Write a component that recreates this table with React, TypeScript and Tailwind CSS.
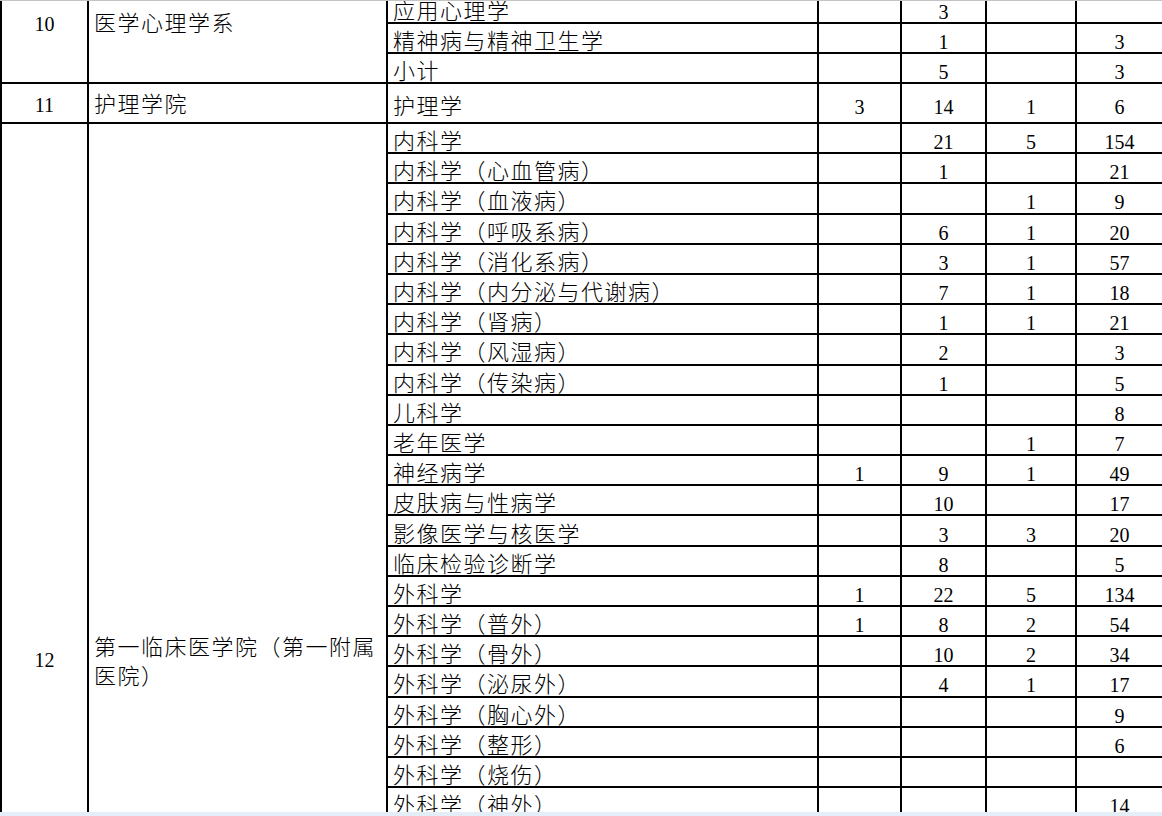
type Row = [string, string, string, string, string];

const psychRows: Row[] = [
  ["应用心理学", "", "3", "", ""],
  ["精神病与精神卫生学", "", "1", "", "3"],
  ["小计", "", "5", "", "3"],
];

const clinicRows: Row[] = [
  ["内科学", "", "21", "5", "154"],
  ["内科学（心血管病）", "", "1", "", "21"],
  ["内科学（血液病）", "", "", "1", "9"],
  ["内科学（呼吸系病）", "", "6", "1", "20"],
  ["内科学（消化系病）", "", "3", "1", "57"],
  ["内科学（内分泌与代谢病）", "", "7", "1", "18"],
  ["内科学（肾病）", "", "1", "1", "21"],
  ["内科学（风湿病）", "", "2", "", "3"],
  ["内科学（传染病）", "", "1", "", "5"],
  ["儿科学", "", "", "", "8"],
  ["老年医学", "", "", "1", "7"],
  ["神经病学", "1", "9", "1", "49"],
  ["皮肤病与性病学", "", "10", "", "17"],
  ["影像医学与核医学", "", "3", "3", "20"],
  ["临床检验诊断学", "", "8", "", "5"],
  ["外科学", "1", "22", "5", "134"],
  ["外科学（普外）", "1", "8", "2", "54"],
  ["外科学（骨外）", "", "10", "2", "34"],
  ["外科学（泌尿外）", "", "4", "1", "17"],
  ["外科学（胸心外）", "", "", "", "9"],
  ["外科学（整形）", "", "", "", "6"],
  ["外科学（烧伤）", "", "", "", ""],
  ["外科学（神外）", "", "", "", "14"],
];

function Cells({ row }: { row: Row }) {
  return (
    <>
      <td className="border-2 border-black pl-[5px] pt-[8px] pb-0 leading-[18px] align-middle whitespace-nowrap">
        {row[0]}
      </td>
      {row.slice(1).map((v, i) => (
        <td
          key={i}
          className="border-2 border-black pt-[8px] pb-0 leading-[18px] align-middle text-center text-[20px] tracking-normal font-normal"
        >
          {v}
        </td>
      ))}
    </>
  );
}

export default function App() {
  return (
    <div className="h-[816px] overflow-hidden bg-white flex flex-col">
      <div className="h-[812px] overflow-hidden border-t border-[#c4c4c4]">
        <table className="mt-[-9px] w-[1162px] table-fixed border-collapse text-black text-[22px] tracking-[1.5px] font-light font-['Liberation_Serif','Noto_Sans_CJK_SC',serif]">
          <colgroup>
            <col className="w-[87px]" />
            <col className="w-[299px]" />
            <col className="w-[431px]" />
            <col className="w-[83px]" />
            <col className="w-[85px]" />
            <col className="w-[90px]" />
            <col className="w-[87px]" />
          </colgroup>
          <tbody>
            {psychRows.map((row, i) => (
              <tr key={"p" + i} className="h-[30px]">
                {i === 0 && (
                  <>
                    <td
                      rowSpan={3}
                      className="border-2 border-black align-top pt-[18px] leading-[24px] text-center text-[20px] tracking-normal font-normal"
                    >
                      10
                    </td>
                    <td rowSpan={3} className="border-2 border-black align-top pt-[18px] pl-[5px] leading-[24px]">
                      医学心理学系
                    </td>
                  </>
                )}
                <Cells row={row} />
              </tr>
            ))}
            <tr className="h-[40px]">
              <td className="border-2 border-black align-middle pt-[4px] leading-[24px] text-center text-[20px] tracking-normal font-normal">
                11
              </td>
              <td className="border-2 border-black align-middle pt-[4px] pl-[5px] leading-[24px]">护理学院</td>
              <Cells row={["护理学", "3", "14", "1", "6"]} />
            </tr>
            {clinicRows.map((row, i) => (
              <tr key={"c" + i} className="h-[30.2px]">
                {i === 0 && (
                  <>
                    <td
                      rowSpan={clinicRows.length}
                      className="border-2 border-black align-top pt-[524px] leading-[24px] text-center text-[20px] tracking-normal font-normal"
                    >
                      12
                    </td>
                    <td
                      rowSpan={clinicRows.length}
                      className="border-2 border-black align-top pt-[509px] pl-[5px] leading-[29px] whitespace-nowrap"
                    >
                      第一临床医学院（第一附属
                      <br />
                      医院）
                    </td>
                  </>
                )}
                <Cells row={row} />
              </tr>
            ))}
          </tbody>
        </table>
      </div>
      <div className="h-[4px] bg-[#e3eef9]" />
    </div>
  );
}
